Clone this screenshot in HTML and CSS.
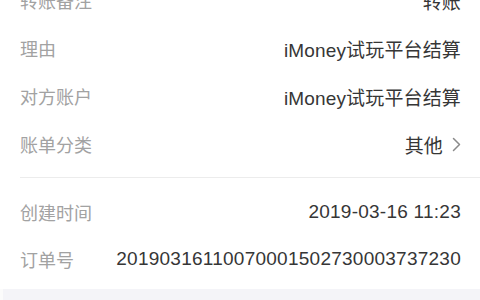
FILE: index.html
```html
<!DOCTYPE html>
<html lang="zh">
<head>
<meta charset="utf-8">
<link rel="stylesheet" href="styles.css">
</head>
<body>
<div class="page">
  <div class="section first">
    <div class="row"><span class="label">转账备注</span><span class="value">转账</span></div>
    <div class="row"><span class="label">理由</span><span class="value">iMoney试玩平台结算</span></div>
    <div class="row"><span class="label">对方账户</span><span class="value">iMoney试玩平台结算</span></div>
    <div class="row"><span class="label">账单分类</span><span class="value link">其他<svg class="chev" width="9" height="15" viewBox="0 0 9 15"><path d="M1.5 1.5 L7.5 7.5 L1.5 13.5" fill="none" stroke="#8a8a8a" stroke-width="1.5" stroke-linecap="round" stroke-linejoin="round"/></svg></span></div>
  </div>
  <div class="divider"></div>
  <div class="section second">
    <div class="row"><span class="label">创建时间</span><span class="value num">2019-03-16 11:23</span></div>
    <div class="row"><span class="label">订单号</span><span class="value num">20190316110070001502730003737230</span></div>
  </div>
  <div class="band"></div>
</div>
</body>
</html>
```
FILE: styles.css
```css
html, body {
  margin: 0;
  padding: 0;
  background: #ffffff;
  overflow: hidden;
}
.page {
  width: 480px;
  height: 300px;
  overflow: hidden;
  font-family: "Liberation Sans", "Noto Sans CJK SC", sans-serif;
  font-size: 19px;
}
.section.first {
  margin-top: -24px;
  padding-bottom: 9px;
}
.section.second {
  padding-top: 10px;
  padding-bottom: 7px;
}
.row {
  height: 48px;
  display: flex;
  align-items: center;
  justify-content: space-between;
  padding: 0 19px 0 20px;
}
.second .row {
  height: 47px;
}
.label {
  color: #a2a2a2;
  font-size: 18px;
}
.value {
  color: #363636;
  letter-spacing: 0.15px;
}
.value.num {
  letter-spacing: 0.25px;
}
.link {
  display: flex;
  align-items: center;
  gap: 9px;
}
.chev {
  display: block;
}
.divider {
  height: 1px;
  background: #ececec;
  margin-left: 20px;
}
.band {
  height: 20px;
  background: #f4f4f8;
  border-left: 3px solid #fbfbfb;
}
```
